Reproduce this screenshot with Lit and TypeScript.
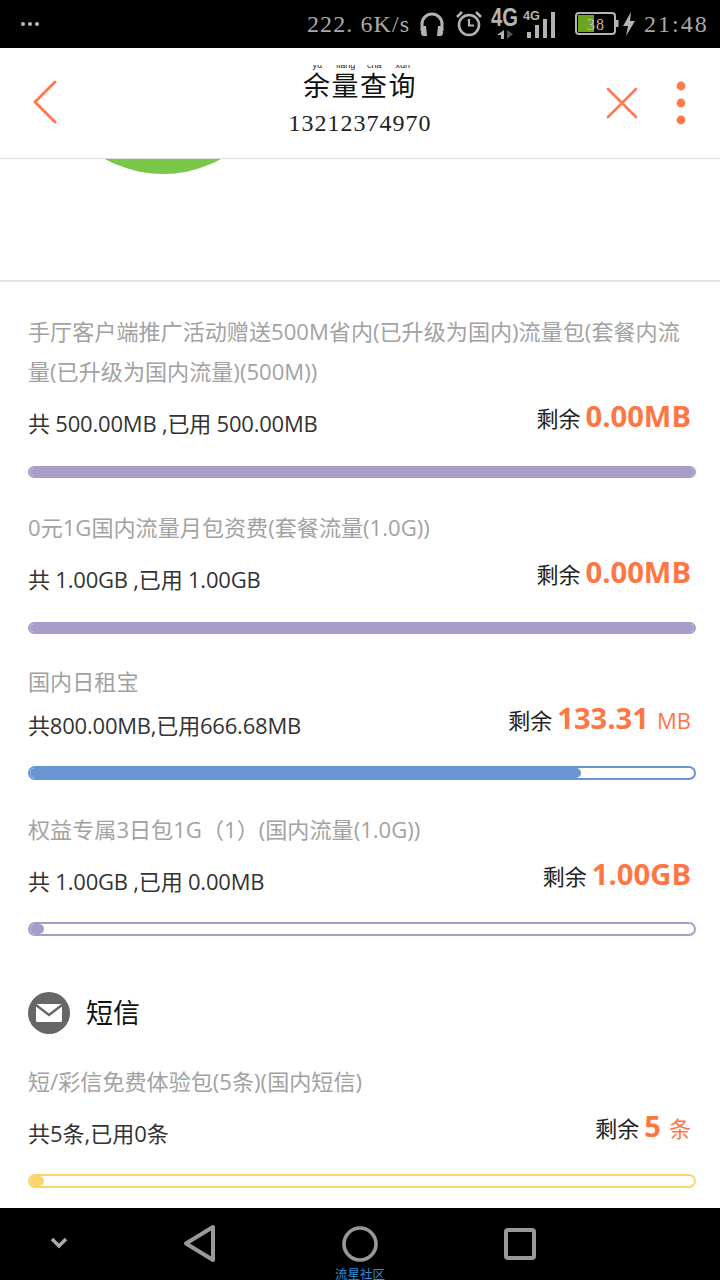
import { LitElement, html, css } from "lit";
import { customElement } from "lit/decorators.js";

interface Row { title: unknown; used: string; pre: string; val: string; unit?: string; color: string; pct: number; cls: string; }

const rows: Row[] = [
  { title: "手厅客户端推广活动赠送500M省内(已升级为国内)流量包(套餐内流量(已升级为国内流量)(500M))", used: "共 500.00MB ,已用 500.00MB", pre: "剩余", val: "0.00MB", color: "#a89cc8", pct: 100, cls: "first thin g29" },
  { title: "0元1G国内流量月包资费(套餐流量(1.0G))", used: "共 1.00GB ,已用 1.00GB", pre: "剩余", val: "0.00MB", color: "#a89cc8", pct: 100, cls: "thin g27" },
  { title: "国内日租宝", used: "共800.00MB,已用666.68MB", pre: "剩余", val: "133.31", unit: "MB", color: "#6895d3", pct: 83, cls: "tight g29" },
  { title: html`权益专属3日包1G<span class="tc">（1）</span>(国内流量(1.0G))`, used: "共 1.00GB ,已用 0.00MB", pre: "剩余", val: "1.00GB", color: "#a89cc8", pct: 2.1, cls: "" },
];
const sms: Row = { title: "短/彩信免费体验包(5条)(国内短信)", used: "共5条,已用0条", pre: "剩余", val: "5", unit: "条", color: "#fbd46d", pct: 2.1, cls: "plain" };

@customElement("app-root")
export class AppRoot extends LitElement {
  static styles = css`
    :host { display: block; width: 720px; height: 1280px; overflow: hidden; background: #fff;
      font-family: "Open Sans", "Noto Sans CJK SC", sans-serif; }
    .page { display: flex; flex-direction: column; height: 1280px; }
    .status { flex: none; height: 48px; background: #000; display: flex; align-items: center; color: #aaa;
      font-family: "Liberation Serif", "Noto Sans CJK SC", serif; }
    .dots { display: flex; gap: 3px; margin-left: 21px; }
    .dots i { width: 4px; height: 4px; border-radius: 50%; background: #bbb; }
    .speed { font-size: 24px; letter-spacing: 1.1px; margin-left: 268px; white-space: nowrap; width: 112px; }
    .status svg { display: block; flex: none; }
    .time { font-size: 24px; letter-spacing: 2px; margin-left: 9px; white-space: nowrap; }
    .head { flex: none; height: 110px; border-bottom: 1px solid #dcdcdc; display: grid; grid-template-columns: 1fr auto 1fr; align-items: start; box-sizing: content-box; }
    .head .back { margin: 32px 0 0 32px; display: block; }
    .ttl { display: flex; flex-direction: column; align-items: center; color: #111;
      font-family: "Liberation Serif", "Noto Sans CJK SC", serif; }
    .clip { margin-top: 17px; height: 38px; overflow: hidden; }
    .rb { margin-top: -5px; }
    ruby { font-size: 27px; line-height: 36px; letter-spacing: 1.5px; ruby-position: over; }
    rt { font-family: "Liberation Sans", sans-serif; font-size: 9px; letter-spacing: 0; line-height: 9px; color: #222; padding-bottom: 2px; }
    .num { font-size: 24px; letter-spacing: 1px; line-height: 28px; margin-top: 6px; color: #222; }
    .acts { display: flex; justify-content: flex-end; align-items: flex-start; }
    .acts svg { display: block; }
    .acts .close { margin: 39px 0 0 0; }
    .acts .more { margin: 33px 34px 0 38px; }
    .body { flex: 1; min-height: 0; overflow: hidden; }
    .chart { height: 121px; overflow: hidden; border-bottom: 2px solid #e6e6e6; box-sizing: content-box; }
    .circle { width: 240px; height: 240px; border-radius: 50%; background: #7ac74a; margin: -225px 0 0 43px; }
    .row { padding: 0 24px 0 28px; }
    .row.first { padding-top: 29px; }
    .row.g29 { margin-bottom: 29px; }
    .row.g27 { margin-bottom: 27px; }
    .title { font-size: 22.1px; line-height: 40px; color: #a2a2a2; }
    .tc { font-family: "Open Sans", "Noto Sans CJK TC", sans-serif; }
    .line { display: flex; justify-content: space-between; align-items: center; height: 40px; margin-top: 9px; }
    .row.tight .line { margin-top: 1px; }
    .used { font-size: 22px; color: #333; padding-top: 3px; letter-spacing: -0.2px; }
    .row.plain .used { letter-spacing: 0; }
    .rest { display: flex; align-items: baseline; padding: 0 5px 8px 0; color: #222; font-size: 22px; white-space: nowrap; }
    .val { font-size: 29.2px; font-weight: 700; color: #ff7645; margin-left: 5px; }
    .unit { font-size: 22px; color: #ff7645; margin-left: 8px; }
    .track { height: 14px; margin-top: 24px; width: 668px; box-sizing: border-box; border: 2px solid; border-radius: 7px; background: #fff; overflow: hidden; }
    .row.thin .track { height: 12px; margin-top: 26px; }
    .fill { height: 100%; border-radius: 7px; }
    .sms { display: flex; align-items: center; gap: 16px; height: 42px; padding: 56px 0 27px 28px; font-size: 27px; color: #111; }
    .sms svg { display: block; }
    .sms span { padding-bottom: 4px; }
    .nav { flex: none; height: 72px; background: #000; display: flex; align-items: flex-start; overflow: hidden; }
    .nav svg { display: block; flex: none; }
    .home { display: flex; flex-direction: column; align-items: center; width: 50px; margin-left: 117px; }
    .cap { font-size: 12.5px; line-height: 14px; color: #2a8fd8; white-space: nowrap; margin-top: 6px; }
  `;

  private row(r: Row) {
    return html`<div class="row ${r.cls}">
      <div class="title">${r.title}</div>
      <div class="line"><span class="used">${r.used}</span>
        <span class="rest">${r.pre}<span class="val">${r.val}</span>${r.unit ? html`<span class="unit">${r.unit}</span>` : ""}</span></div>
      <div class="track" style="border-color:${r.color}"><div class="fill" style="width:${r.pct}%;background:${r.color}"></div></div>
    </div>`;
  }

  render() {
    const g = "#b4b4b4";
    return html`<div class="page">
      <div class="status">
        <div class="dots"><i></i><i></i><i></i></div>
        <div class="speed">222. 6K/s</div>
        <svg width="26" height="26" viewBox="0 0 26 26" style="margin-left:0"><path d="M3 20V13a10 10 0 0 1 20 0v7" fill="none" stroke="${g}" stroke-width="3"/><path d="M3 15h4l1 10H5a3 3 0 0 1-3-3zM23 15h-4l-1 10h3a3 3 0 0 0 3-3z" fill="${g}"/></svg>
        <svg width="26" height="26" viewBox="0 0 26 26" style="margin-left:11px"><circle cx="13" cy="14" r="10" fill="none" stroke="${g}" stroke-width="2.6"/><path d="M13 8v6.5h5" fill="none" stroke="${g}" stroke-width="2.2"/><path d="M1 6l5-5M25 6l-5-5" stroke="${g}" stroke-width="2.6"/></svg>
        <svg width="28" height="34" viewBox="0 0 28 34" style="margin-left:9px;margin-top:-2px"><text x="0" y="20" font-family="Liberation Sans" font-weight="700" font-size="25" fill="${g}" textLength="27" lengthAdjust="spacingAndGlyphs">4G</text><path d="M13 24v9h-3v-4h-4z" fill="${g}"/><path d="M16 24v9l6-5z" fill="#555"/></svg>
        <svg width="34" height="30" viewBox="0 0 34 30" style="margin-left:4px;margin-top:-1px"><text x="0" y="11" font-family="Liberation Sans" font-weight="700" font-size="13.5" fill="${g}" textLength="17" lengthAdjust="spacingAndGlyphs">4G</text><path d="M4 23h4v6H4zM12 16h4v13h-4zM20 10h4v19h-4zM28 3h4v26h-4z" fill="${g}"/></svg>
        <svg width="44" height="24" viewBox="0 0 44 24" style="margin-left:18px"><rect x="1" y="1" width="39" height="21" rx="3" fill="none" stroke="${g}" stroke-width="2"/><rect x="3" y="3" width="16" height="17" fill="#6aa51e"/><rect x="41" y="8" width="2.500" height="7" fill="${g}"/><text x="12" y="18" font-family="Liberation Serif" font-size="16" fill="#bbb" letter-spacing="1">38</text></svg>
        <svg width="12" height="24" viewBox="0 0 12 24" style="margin-left:4px"><path d="M8 0L0 14h5l-2 10 9-15H7z" fill="${g}"/></svg>
        <span class="time">21:48</span>
      </div>
      <div class="head">
        <svg class="back" width="26" height="44" viewBox="0 0 26 44"><path d="M23 2L3 22l20 20" fill="none" stroke="#ff7a50" stroke-width="3" stroke-linecap="round" stroke-linejoin="round"/></svg>
        <div class="ttl">
          <div class="clip"><div class="rb"><ruby>余<rt>yu</rt>量<rt>liang</rt>查<rt>cha</rt>询<rt>xun</rt></ruby></div></div>
          <div class="num">13212374970</div>
        </div>
        <div class="acts">
          <svg class="close" width="32" height="32" viewBox="0 0 32 32"><path d="M2 2l28 28M30 2L2 30" fill="none" stroke="#ff7a50" stroke-width="2.600" stroke-linecap="round"/></svg>
          <svg class="more" width="10" height="44" viewBox="0 0 10 44"><circle cx="5" cy="5" r="4.400" fill="#ff7a45"/><circle cx="5" cy="22" r="4.400" fill="#ff7a45"/><circle cx="5" cy="39" r="4.400" fill="#ff7a45"/></svg>
        </div>
      </div>
      <div class="body">
        <div class="chart"><div class="circle"></div></div>
        ${rows.map((r) => this.row(r))}
        <div class="sms">
          <svg width="42" height="42" viewBox="0 0 42 42"><circle cx="21" cy="21" r="21" fill="#666"/><rect x="8" y="12" width="26" height="18" rx="1.500" fill="#fff"/><path d="M8 13l13 10 13-10" fill="none" stroke="#666" stroke-width="2.400"/></svg>
          <span>短信</span>
        </div>
        ${this.row(sms)}
      </div>
      <div class="nav">
        <svg width="20" height="12" viewBox="0 0 20 12" style="margin:29px 0 0 49px"><path d="M3 2l7 7 7-7" fill="none" stroke="#aaa" stroke-width="3.400"/></svg>
        <svg width="36" height="40" viewBox="0 0 36 40" style="margin:16px 0 0 113px"><path d="M31 3v33L4 19.500z" fill="none" stroke="#999" stroke-width="4" stroke-linejoin="round"/></svg>
        <div class="home">
          <svg width="36" height="36" viewBox="0 0 36 36" style="margin-top:18px"><circle cx="18" cy="18" r="16" fill="none" stroke="#999" stroke-width="3.600"/></svg>
          <span class="cap">流星社区</span>
        </div>
        <svg width="32" height="32" viewBox="0 0 32 32" style="margin:20px 0 0 119px"><rect x="2" y="2" width="28" height="28" rx="2" fill="none" stroke="#999" stroke-width="4"/></svg>
      </div>
    </div>`;
  }
}
